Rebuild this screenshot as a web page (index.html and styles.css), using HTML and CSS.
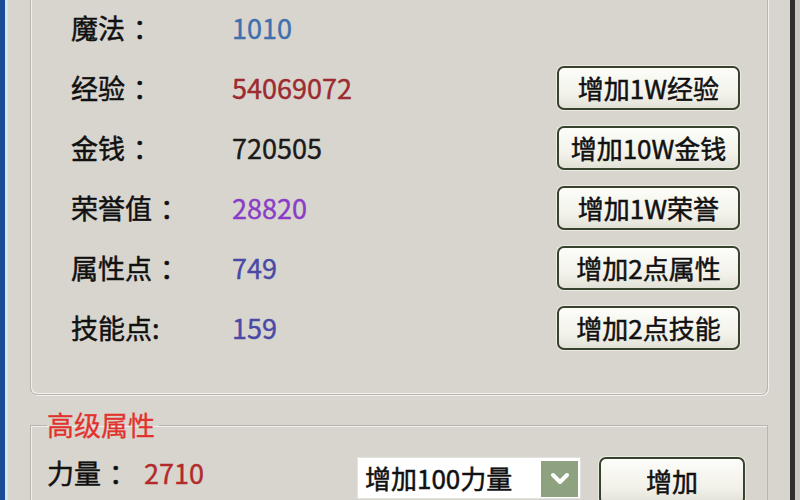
FILE: index.html
```html
<!DOCTYPE html>
<html lang="zh-CN">
<head>
<meta charset="utf-8">
<title>属性修改</title>
<link rel="stylesheet" href="styles.css">
</head>
<body>
<div class="window">
  <div class="frame-l"></div>
  <div class="client">
    <div class="group1">
      <div class="row">
        <span class="label">魔法<span class="colon">：</span></span>
        <span class="value v-blue">1010</span>
      </div>
      <div class="row">
        <span class="label">经验<span class="colon">：</span></span>
        <span class="value v-red">54069072</span>
        <button class="btn">增加1W经验</button>
      </div>
      <div class="row">
        <span class="label">金钱<span class="colon">：</span></span>
        <span class="value v-black">720505</span>
        <button class="btn">增加10W金钱</button>
      </div>
      <div class="row">
        <span class="label">荣誉值<span class="colon">：</span></span>
        <span class="value v-purple">28820</span>
        <button class="btn">增加1W荣誉</button>
      </div>
      <div class="row">
        <span class="label">属性点<span class="colon">：</span></span>
        <span class="value v-slate">749</span>
        <button class="btn">增加2点属性</button>
      </div>
      <div class="row">
        <span class="label">技能点:</span>
        <span class="value v-slate">159</span>
        <button class="btn">增加2点技能</button>
      </div>
    </div>
    <fieldset class="group2">
      <legend class="legend">高级属性</legend>
      <div class="row2">
        <span class="label2">力量<span class="colon">：</span></span>
        <span class="value2">2710</span>
        <div class="combo">
          <span class="combo-text">增加100力量</span>
          <span class="combo-btn">
            <svg width="20" height="14" viewBox="0 0 20 14"><path d="M3 3 L10 10 L17 3" fill="none" stroke="#ffffff" stroke-width="4" stroke-linecap="round" stroke-linejoin="round"/></svg>
          </span>
        </div>
        <button class="btn btn-add">增加</button>
      </div>
    </fieldset>
  </div>
  <div class="frame-r"></div>
</div>
</body>
</html>
```
FILE: styles.css
```css
html, body {
  margin: 0;
  padding: 0;
}
body {
  width: 800px;
  height: 500px;
  overflow: hidden;
  background: #d7d4cd;
  font-family: "Noto Sans CJK SC", "Liberation Sans", sans-serif;
}
.window {
  display: flex;
  width: 800px;
  height: 500px;
  overflow: hidden;
  background: #d7d4cd;
}
.frame-l {
  width: 5px;
  flex: none;
  background: #1b4b96;
  border-right: 3px solid #d4e4f6;
}
.frame-r {
  width: 5px;
  flex: none;
  background: #c9c7c2;
  border-left: 5px solid #2e2e2e;
}
.client {
  flex: 1;
  padding: 0 22px 0 22px;
  display: flex;
  flex-direction: column;
  background: #d8d5ce;
}
.group1 {
  margin-top: -2px;
  padding: 0 29px 36px 40px;
  border: 1px solid #b9b5ad;
  border-top: none;
  border-radius: 0 0 7px 7px;
  box-shadow: inset 1px -1px 0 #f2f0ec, 1px 1px 0 #f2f0ec;
  display: flex;
  flex-direction: column;
}
.row {
  height: 60px;
  display: flex;
  align-items: center;
}
.label {
  width: 161px;
  font-size: 27px;
  line-height: 30px;
  color: #111;
  white-space: nowrap;
  -webkit-text-stroke: 0.5px currentColor;
}
.colon {
  margin-left: 8px;
}
.value {
  font-size: 27px;
  line-height: 30px;
  -webkit-text-stroke: 0.4px currentColor;
}
.v-blue { color: #3f6fae; }
.v-red { color: #9c2a30; }
.v-black { color: #1a1a1a; }
.v-purple { color: #8a3cc6; }
.v-slate { color: #4a4aa6; }
.btn {
  margin-left: auto;
  margin-right: -2px;
  width: 183px;
  height: 44px;
  padding: 0;
  border: 2px solid #37432e;
  border-radius: 7px;
  background: linear-gradient(#fdfdfa, #f1f0e8 70%, #e2e1d6);
  box-shadow: 0 0 0 1px #ecebe2;
  font-family: "Noto Sans CJK SC", "Liberation Sans", sans-serif;
  font-size: 26px;
  line-height: 38px;
  color: #111;
  -webkit-text-stroke: 0.5px currentColor;
}
.group2 {
  margin: 15px 0 0 0;
  padding: 17px 20px 0 16px;
  border: 1px solid #b9b5ad;
  border-bottom: none;
  box-shadow: inset 1px 1px 0 #f2f0ec;
  min-width: 0;
}
.legend {
  padding: 0 4px 0 0;
  font-size: 27px;
  line-height: 30px;
  color: #e2322e;
  -webkit-text-stroke: 0.3px currentColor;
}
.row2 {
  display: flex;
  align-items: flex-start;
}
.label2 {
  width: 97px;
  margin-top: 1px;
  font-size: 27px;
  line-height: 30px;
  color: #111;
  white-space: nowrap;
  -webkit-text-stroke: 0.5px currentColor;
}
.value2 {
  width: 213px;
  margin-top: 1px;
  font-size: 27px;
  line-height: 30px;
  color: #b32a2a;
  -webkit-text-stroke: 0.4px currentColor;
}
.combo {
  width: 224px;
  height: 42px;
  box-sizing: border-box;
  display: flex;
  align-items: flex-start;
  background: #ffffff;
  border: 1px solid #e4e2dc;
  padding: 3px 2px 0 7px;
}
.combo-text {
  flex: 1;
  font-size: 26px;
  line-height: 34px;
  color: #111;
  -webkit-text-stroke: 0.5px currentColor;
}
.combo-btn {
  width: 37px;
  height: 36px;
  background: #8ea27f;
  display: flex;
  align-items: center;
  justify-content: center;
}
.btn-add {
  margin-left: 18px;
  margin-right: 0;
  width: 146px;
  height: 48px;
  line-height: 40px;
  padding-top: 0;
}
```
